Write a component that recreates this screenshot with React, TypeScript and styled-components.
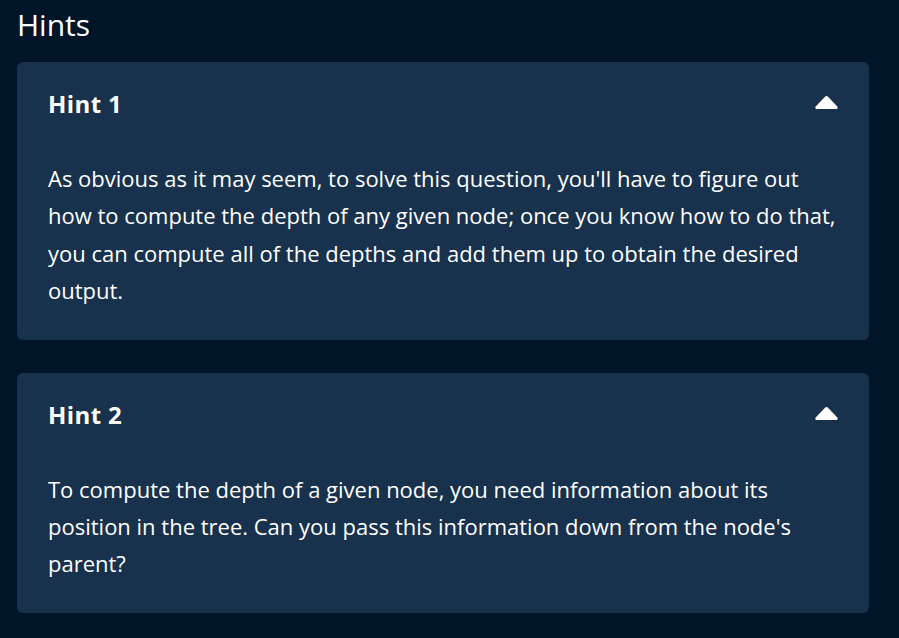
import React from 'react';
import styled, { createGlobalStyle } from 'styled-components';

const GlobalStyle = createGlobalStyle`
  html, body {
    margin: 0;
    padding: 0;
    background: #011528;
  }
  body {
    font-family: "Open Sans", "Noto Sans", sans-serif;
    color: #ffffff;
  }
`;

const Page = styled.div`
  padding: 7px 30px 24px 17px;
`;

const Title = styled.h1`
  margin: 0 0 19px 0;
  font-size: 30px;
  font-weight: 400;
  line-height: 36px;
`;

const HintList = styled.div`
  display: flex;
  flex-direction: column;
  gap: 33px;
`;

const HintCard = styled.section`
  background: #18314c;
  border-radius: 6px;
  padding: 27px 31px 30px 31px;
`;

const HintHeader = styled.div`
  display: flex;
  align-items: center;
  justify-content: space-between;
  height: 29px;
`;

const HintTitle = styled.h2`
  margin: 0;
  font-size: 24px;
  font-weight: 700;
  line-height: 29px;
  letter-spacing: 0.4px;
`;

const Caret = styled.svg`
  width: 23px;
  height: 13px;
  margin-top: -2px;
`;

const HintBody = styled.p`
  margin: 42px 0 0 0;
  font-size: 22px;
  line-height: 1.7;
`;

const CaretUp: React.FC = () => (
  <Caret viewBox="0 0 23 13">
    <path
      d="M10.2 0.6 Q11.5 -0.4 12.8 0.6 L22.3 10.6 Q23.4 12.2 21.6 13 L1.4 13 Q-0.4 12.2 0.7 10.6 Z"
      fill="#ffffff"
    />
  </Caret>
);

const hints = [
  {
    title: 'Hint 1',
    text: "As obvious as it may seem, to solve this question, you'll have to figure out how to compute the depth of any given node; once you know how to do that, you can compute all of the depths and add them up to obtain the desired output.",
  },
  {
    title: 'Hint 2',
    text: "To compute the depth of a given node, you need information about its position in the tree. Can you pass this information down from the node's parent?",
  },
];

const App: React.FC = () => {
  return (
    <>
      <GlobalStyle />
      <Page>
        <Title>Hints</Title>
        <HintList>
          {hints.map(hint => (
            <HintCard key={hint.title}>
              <HintHeader>
                <HintTitle>{hint.title}</HintTitle>
                <CaretUp />
              </HintHeader>
              <HintBody>{hint.text}</HintBody>
            </HintCard>
          ))}
        </HintList>
      </Page>
    </>
  );
};

export default App;
